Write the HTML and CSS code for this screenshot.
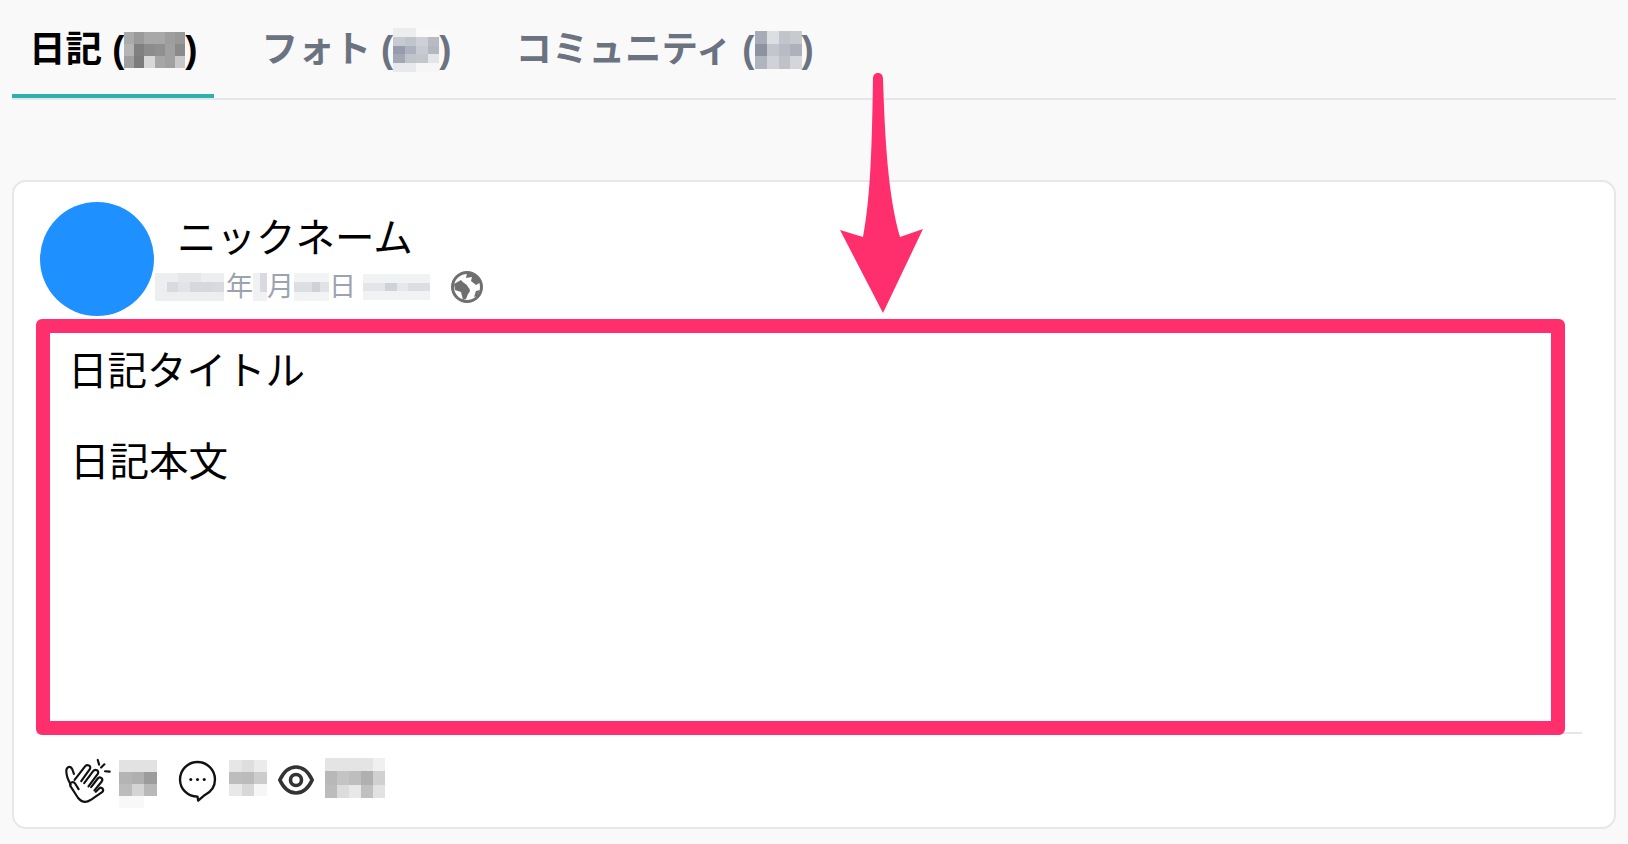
FILE: index.html
```html
<!DOCTYPE html>
<html lang="ja">
<head>
<meta charset="utf-8">
<title>日記</title>
<link rel="stylesheet" href="styles.css">
</head>
<body>
<div class="page">
  <nav class="tabs">
    <div class="tab active">日記 (<svg class="blur b-tab1" viewBox="0 0 6 3" preserveAspectRatio="none" shape-rendering="crispEdges"><rect width="1" height="1" fill="#aaa"/><rect x="1" width="1" height="1" fill="#9a9a9a"/><rect x="2" width="2" height="1" fill="#a8a8a8"/><rect x="4" width="1" height="1" fill="#9e9e9e"/><rect x="5" width="1" height="1" fill="#999"/><rect y="1" width="1" height="1" fill="#b4b4b4"/><rect x="1" y="1" width="1" height="1" fill="#808080"/><rect x="2" y="1" width="1" height="1" fill="#8c8c8c"/><rect x="3" y="1" width="1" height="1" fill="#909090"/><rect x="4" y="1" width="1" height="1" fill="#a0a0a0"/><rect x="5" y="1" width="1" height="1" fill="#8a8a8a"/><rect y="2" width="1" height="1" fill="#a0a0a0"/><rect x="1" y="2" width="1" height="1" fill="#7c7c7c"/><rect x="2" y="2" width="1" height="1" fill="#d8d8d8"/><rect x="3" y="2" width="1" height="1" fill="#a6a6a6"/><rect x="4" y="2" width="1" height="1" fill="#a0a0a0"/><rect x="5" y="2" width="1" height="1" fill="#c8c8c8"/></svg>)</div>
    <div class="tab">フォト (<svg class="blur b-tab2" viewBox="0 0 4 5" preserveAspectRatio="none" shape-rendering="crispEdges"><rect width="2" height="1" fill="#eceeee"/><rect x="2" width="2" height="1" fill="#fafafb"/><rect y="1" width="1" height="1" fill="#c8cad2"/><rect x="1" y="1" width="1" height="1" fill="#c0c4cc"/><rect x="2" y="1" width="1" height="1" fill="#ced0d6"/><rect x="3" y="1" width="1" height="1" fill="#b8bac4"/><rect y="2" width="1" height="1" fill="#969cac"/><rect x="1" y="2" width="1" height="1" fill="#aeb2be"/><rect x="2" y="2" width="1" height="1" fill="#c8cad2"/><rect x="3" y="2" width="1" height="1" fill="#b4b6c0"/><rect y="3" width="1" height="1" fill="#a4a8b4"/><rect x="1" y="3" width="1" height="1" fill="#c2c4cc"/><rect x="2" y="3" width="1" height="1" fill="#c4c6ce"/><rect x="3" y="3" width="1" height="1" fill="#e4e5e8"/><rect y="4" width="2" height="1" fill="#e8e9ec"/><rect x="2" y="4" width="2" height="1" fill="#f6f6f7"/></svg>)</div>
    <div class="tab">コミュニティ (<svg class="blur b-tab3" viewBox="0 0 4 3" preserveAspectRatio="none" shape-rendering="crispEdges"><rect width="1" height="1" fill="#a8acb6"/><rect x="1" width="1" height="1" fill="#dcdee2"/><rect x="2" width="1" height="1" fill="#c2c4cc"/><rect x="3" width="1" height="1" fill="#c8cad0"/><rect y="1" width="1" height="1" fill="#8e92a0"/><rect x="1" y="1" width="1" height="1" fill="#c4c6ce"/><rect x="2" y="1" width="1" height="1" fill="#b8bac4"/><rect x="3" y="1" width="1" height="1" fill="#aeb0ba"/><rect y="2" width="1" height="1" fill="#b0b4bc"/><rect x="1" y="2" width="1" height="1" fill="#d0d2d8"/><rect x="2" y="2" width="1" height="1" fill="#c0c2ca"/><rect x="3" y="2" width="1" height="1" fill="#d4d6da"/></svg>)</div>
  </nav>

  <article class="card">
    <header class="head">
      <div class="avatar"></div>
      <div class="meta">
        <div class="name">ニックネーム</div>
        <div class="date">
          <svg class="blur b-d1" viewBox="0 0 6 3" preserveAspectRatio="none" shape-rendering="crispEdges"><rect width="6" height="3" fill="#eceef0"/><rect x="1" y="1" width="1" height="1" fill="#d8dade"/><rect x="2" y="1" width="1" height="1" fill="#e2e3e7"/><rect x="3" y="1" width="2" height="1" fill="#d6d8de"/><rect x="5" y="1" width="1" height="1" fill="#d8dade"/><rect x="2" y="0" width="2" height="1" fill="#e6e7ea"/></svg><span>年</span><svg class="blur b-d2" viewBox="0 0 2 3" preserveAspectRatio="none" shape-rendering="crispEdges"><rect width="2" height="3" fill="#f0f1f3"/><rect x="1" width="1" height="2" fill="#d8dae0"/></svg><span>月</span><svg class="blur b-d3" viewBox="0 0 4 3" preserveAspectRatio="none" shape-rendering="crispEdges"><rect width="4" height="3" fill="#f2f3f4"/><rect y="1" width="2" height="1" fill="#dcdee2"/><rect x="2" y="1" width="1" height="1" fill="#cfd1d9"/><rect x="3" y="1" width="1" height="1" fill="#e0e2e6"/></svg><span>日</span><svg class="blur b-d4" viewBox="0 0 6 3" preserveAspectRatio="none" shape-rendering="crispEdges"><rect width="6" height="3" fill="#f1f2f4"/><rect y="1" width="2" height="1" fill="#e4e5e9"/><rect x="2" y="1" width="1" height="1" fill="#d0d2da"/><rect x="3" y="1" width="1" height="1" fill="#e6e7ea"/><rect x="4" y="1" width="2" height="1" fill="#dcdee3"/></svg>
          <svg class="globe" viewBox="0 0 32 32"><circle cx="16" cy="16" r="14.5" fill="none" stroke="#6f6f6f" stroke-width="3"/><path fill="#6f6f6f" d="M16 2 C22 2 27 5 30 11 L25 14 L20 10 L21 6 L15 7 Z M3 13 L10 9 C12 12 16 13 17 16 C19 18 20 20 17 23 L15 28 L12 29 L10 21 L4 19 Z M25 20 L29 19 L26 25 L23 26 Z"/></svg>
        </div>
      </div>
    </header>
    <section class="body">
      <p class="title">日記タイトル</p>
      <p class="text">日記本文</p>
    </section>
    <footer class="foot">
      <svg class="ico clap" viewBox="40 30 145 145" fill="none" stroke="#111" stroke-width="6.5" stroke-linecap="round" stroke-linejoin="round"><path d="M60 116 C52 102 47 88 47 76 C47 62 60 58 65 70 L70 84"/><path d="M72 102 L103 62 C109 54 124 59 118 70 L92 106"/><path d="M101 112 L128 76 C134 68 148 74 142 84 L114 122"/><path d="M122 124 L142 98 C148 90 160 98 154 107 L132 134"/><path d="M136 138 L146 128 C153 121 163 132 155 139 L120 163 C106 172 92 168 82 156 L60 122 C54 110 68 104 74 114 L84 130"/><path d="M142 42 L146 56 M162 55 L152 65 M164 76 L178 77"/></svg>
      <svg class="blur b-c1" viewBox="0 0 3 4" preserveAspectRatio="none" shape-rendering="crispEdges"><rect width="3" height="1" fill="#e2e2e2"/><rect y="1" width="1" height="1" fill="#b4b4b4"/><rect x="1" y="1" width="1" height="1" fill="#b0b0b0"/><rect x="2" y="1" width="1" height="1" fill="#9c9c9c"/><rect y="2" width="1" height="1" fill="#bcbcbc"/><rect x="1" y="2" width="1" height="1" fill="#d4d4d4"/><rect x="2" y="2" width="1" height="1" fill="#b8b8b8"/><rect y="3" width="2" height="1" fill="#f8f8f8"/><rect x="2" y="3" width="1" height="1" fill="#fff"/></svg>
      <svg class="ico bubble" viewBox="20 24 116 128" fill="none" stroke="#111" stroke-width="7"><path stroke-linejoin="round" d="M100 131 C122 120 130 102 130 85 C130 56 107 33 78 33 C49 33 26 56 26 85 C26 114 49 136 78 136 L80 148 Z"/><circle cx="58" cy="85" r="4.5" fill="#111" stroke="none"/><circle cx="78" cy="85" r="4.5" fill="#111" stroke="none"/><circle cx="98" cy="85" r="4.5" fill="#111" stroke="none"/></svg>
      <svg class="blur b-c2" viewBox="0 0 3 3" preserveAspectRatio="none" shape-rendering="crispEdges"><rect width="1" height="1" fill="#e6e6e6"/><rect x="1" width="1" height="1" fill="#dedede"/><rect x="2" width="1" height="1" fill="#ebebeb"/><rect y="1" width="1" height="1" fill="#bdbdbd"/><rect x="1" y="1" width="1" height="1" fill="#bbb"/><rect x="2" y="1" width="1" height="1" fill="#ccc"/><rect y="2" width="1" height="1" fill="#e8e8e8"/><rect x="1" y="2" width="1" height="1" fill="#d8d8d8"/><rect x="2" y="2" width="1" height="1" fill="#f6f6f6"/></svg>
      <svg class="ico eye" viewBox="0 0 36 30" fill="none" stroke="#333" stroke-width="3.6"><path d="M1.8 15 C6 6 12 2 18 2 C24 2 30 6 34.2 15 C30 24 24 28 18 28 C12 28 6 24 1.8 15 Z"/><circle cx="18" cy="15" r="5.5"/></svg>
      <svg class="blur b-c3" viewBox="0 0 5 3" preserveAspectRatio="none" shape-rendering="crispEdges"><rect width="5" height="1" fill="#e4e4e4"/><rect x="4" width="1" height="1" fill="#f0f0f0"/><rect y="1" width="1" height="1" fill="#b8b8b8"/><rect x="1" y="1" width="1" height="1" fill="#c4c4c4"/><rect x="2" y="1" width="1" height="1" fill="#bebebe"/><rect x="3" y="1" width="1" height="1" fill="#b0b0b0"/><rect x="4" y="1" width="1" height="1" fill="#d0d0d0"/><rect y="2" width="1" height="1" fill="#bcbcbc"/><rect x="1" y="2" width="1" height="1" fill="#dcdcdc"/><rect x="2" y="2" width="1" height="1" fill="#e8e8e8"/><rect x="3" y="2" width="1" height="1" fill="#c0c0c0"/><rect x="4" y="2" width="1" height="1" fill="#e2e2e2"/></svg>
    </footer>
  </article>

  <svg class="arrow" viewBox="0 0 100 250"><path fill="#ff2e6c" d="M38 9 C38 5 40 3 43 3 C46 3 48 5 48 9 C50 70 53 125 65 167 L88 159 L48 243 L5 160 L28 167 C36 125 37 70 38 9 Z"/></svg>
</div>
</body>
</html>
```
FILE: styles.css
```css
* { box-sizing: border-box; }
html, body { margin: 0; height: 100%; }
body {
  background: #f9f9fa;
  color: #000;
  font-family: "Liberation Sans", "Noto Sans CJK JP", sans-serif;
  overflow: hidden;
}
.page { position: relative; width: 1628px; height: 844px; padding: 0 12px; }
.tabs {
  display: flex;
  gap: 30px;
  height: 100px;
  width: 1604px;
  border-bottom: 2px solid #e5e7eb;
}
.tab {
  display: flex;
  align-items: center;
  height: 98px;
  padding: 6px 17px 0;
  border-bottom: 4px solid transparent;
  font-size: 36.5px;
  line-height: 40px;
  font-weight: 700;
  color: #6b7280;
  white-space: pre;
}
.tab.active {
  color: #000;
  border-bottom-color: #2bb0b0;
}
.blur { display: block; flex: none; }
.b-tab1 { width: 61px; height: 36px; }
.b-tab2 { width: 46px; height: 44px; }
.b-tab3 { width: 47px; height: 38px; }

.card {
  margin: 80px 0 0 0;
  width: 1604px;
  height: 649px;
  background: #fff;
  border: 2px solid #e5e7eb;
  border-radius: 14px;
  padding: 20px 49px 0 22px;
}
.head { display: flex; height: 117px; padding-left: 4px; }
.avatar {
  flex: none;
  width: 114px;
  height: 114px;
  border-radius: 50%;
  background: #1e90ff;
}
.meta { display: flex; flex-direction: column; }
.name {
  margin: 12px 0 0 23px;
  font-size: 39.5px;
  line-height: 48px;
  font-weight: 400;
}
.date {
  display: flex;
  align-items: center;
  margin: 9px 0 0 1px;
  font-size: 27px;
  line-height: 32px;
  color: #9ca3af;
}
.b-d1 { width: 69px; height: 28px; margin-right: 2px; }
.b-d2 { width: 14px; height: 28px; }
.b-d3 { width: 35px; height: 28px; }
.b-d4 { width: 67px; height: 26px; margin-left: 7px; }
.globe { width: 32px; height: 32px; margin-left: 21px; flex: none; }

.body {
  width: 1529px;
  height: 416px;
  border: 14px solid #ff2e6c;
  border-radius: 6px;
  padding: 10px 0 0 18px;
  position: relative;
  z-index: 1;
}
.title, .text { margin: 0; font-size: 39.5px; line-height: 56px; }
.text { margin: 35px 0 0 2px; }
.foot {
  display: flex;
  align-items: center;
  height: 76px;
  padding: 18px 0 0 28px;
  margin: -3px 0 0 0;
  width: 1546px;
  border-top: 2px solid #e5e7eb;
}
.ico { flex: none; }
.clap { width: 48px; height: 48px; margin-right: 7px; }
.bubble { width: 39px; height: 43px; margin-left: 21px; }
.eye { width: 36px; height: 30px; margin-left: 11px; }
.b-c1 { width: 38px; height: 48px; margin-top: 8px; }
.b-c2 { width: 38px; height: 36px; margin: -4px 0 0 12px; }
.b-c3 { width: 60px; height: 40px; margin: -4px 0 0 11px; }

.arrow {
  position: absolute;
  left: 835px;
  top: 70px;
  width: 100px;
  height: 250px;
}
```
